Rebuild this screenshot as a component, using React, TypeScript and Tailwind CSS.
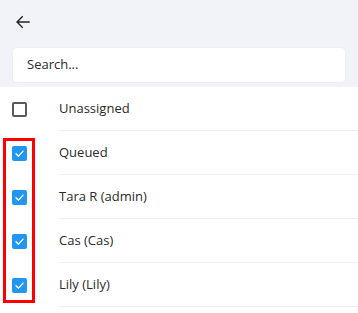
import React from 'react'

const people = [
  { name: 'Unassigned', checked: false },
  { name: 'Queued', checked: true },
  { name: 'Tara R (admin)', checked: true },
  { name: 'Cas (Cas)', checked: true },
  { name: 'Lily (Lily)', checked: true },
]

function Box({ checked }: { checked: boolean }) {
  if (!checked) {
    return <div className='w-[15px] h-[15px] rounded-[2px] border-2 border-[#5a5a5a] bg-white' />
  }
  return (
    <div className='w-[15px] h-[15px] rounded-[2px] bg-[#2196f3] flex items-center justify-center'>
      <svg width='11' height='11' viewBox='0 0 12 12' fill='none'>
        <path d='M2.2 6.3 L4.9 8.9 L9.9 3.4' stroke='white' strokeWidth='1.5' strokeLinecap='round' strokeLinejoin='round' />
      </svg>
    </div>
  )
}

export default function App() {
  return (
    <div className='relative w-[358px] h-[313px] bg-white overflow-hidden' style={{ fontFamily: '"Open Sans", "Noto Sans", sans-serif' }}>

      {/* header */}
      <div className='h-[87px] bg-[#f2f3f8] px-[13px] pt-[13px]'>
        <svg width='18' height='18' viewBox='0 0 24 24' fill='none' className='ml-[1px]'>
          <path d='M20 12H5M11 5l-7 7 7 7' stroke='#222' strokeWidth='1.8' strokeLinecap='square' />
        </svg>
        <div className='mt-[17px] h-[34px] bg-white rounded-[4px] shadow-[0_0_2px_rgba(0,0,0,0.08)] flex items-center pl-[14px] text-[13px] text-[#2b2b2b]'>
          Search...
        </div>
      </div>

      {/* list */}
      <div>
        {people.map((p) => (
          <div key={p.name} className='flex items-center h-[44px]'>
            <div className='w-[59px] flex items-center pl-[12px]'>
              <Box checked={p.checked} />
            </div>
            <div className='flex-1 h-full flex items-center border-b border-[#eef0f3] text-[13px] text-[#2a2a2a]'>
              {p.name}
            </div>
          </div>
        ))}
      </div>

      {/* highlight */}
      <div className='absolute left-[3px] top-[138px] w-[32px] h-[165px] border-[3px] border-[#ff0000]' />
    </div>
  )
}
